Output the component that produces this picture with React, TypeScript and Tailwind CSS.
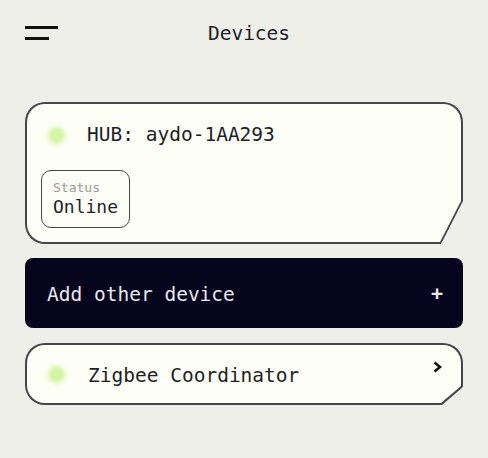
const mono = { fontFamily: '"DejaVu Sans Mono", "Liberation Mono", monospace' }

function Dot() {
  return <div className="h-[17px] w-[17px] shrink-0 rounded-full bg-[#d3f5a2] blur-[2px]" />
}

function Hamburger() {
  return (
    <div className="flex w-[33px] flex-col gap-[8px]">
      <span className="block h-[3px] w-[33px] bg-[#111]" />
      <span className="block h-[3px] w-[24px] bg-[#111]" />
    </div>
  )
}

function Chevron() {
  return (
    <svg width="9" height="12" viewBox="0 0 9 12" fill="none">
      <path d="M1.5 1.5 L7 6 L1.5 10.5" stroke="#111" strokeWidth="2.6" strokeLinejoin="miter" />
    </svg>
  )
}

export default function App() {
  return (
    <div className="min-h-[458px] w-full bg-[#eeefe8] text-[#1e1e28]" style={mono}>
      <header className="relative flex h-[66px] items-center px-[25px]">
        <Hamburger />
        <h1 className="absolute left-[calc(50%+5px)] top-[calc(50%+1px)] -translate-x-1/2 -translate-y-1/2 text-[19.5px]">
          Devices
        </h1>
      </header>

      <main className="mt-[36px] flex flex-col px-[25px]">
        {/* hub card, frame colour shows through as a 2px border */}
        <div className="rounded-[20px] bg-[#45454d] p-[2px] [clip-path:polygon(0_0,100%_0,100%_calc(100%_-_43px),calc(100%_-_22px)_100%,0_100%)]">
          <div className="flex h-[138px] flex-col rounded-[18px] bg-[#fdfef6] [clip-path:polygon(0_0,100%_0,100%_calc(100%_-_41px),calc(100%_-_21px)_100%,0_100%)]">
            <div className="flex items-center gap-[22px] pl-[21px] pt-[21px]">
              <Dot />
              <span className="text-[19.5px] leading-[20px]">HUB: aydo-1AA293</span>
            </div>
            <div className="ml-[14px] mt-[25px] flex h-[58px] w-[89px] flex-col justify-center rounded-[10px] border-[1.5px] border-[#45454d] pl-[11px]">
              <span className="text-[13px] leading-[16px] text-[#9c9c94]">Status</span>
              <span className="text-[18px] leading-[22px]">Online</span>
            </div>
          </div>
        </div>

        <button className="mt-[14px] flex h-[70px] items-center justify-between rounded-[8px] bg-[#07041e] pl-[22px] pr-[20px] text-[#e8e8ec]">
          <span className="pt-[3px] text-[19.5px]">Add other device</span>
          <span className="text-[20px] font-bold">+</span>
        </button>

        <div className="mt-[15px] rounded-[20px] bg-[#45454d] p-[2px] [clip-path:polygon(0_0,100%_0,100%_calc(100%_-_18px),calc(100%_-_21px)_100%,0_100%)]">
          <div className="flex h-[58px] items-center rounded-[18px] bg-[#fdfef6] pl-[21px] pr-[19px] [clip-path:polygon(0_0,100%_0,100%_calc(100%_-_17px),calc(100%_-_20px)_100%,0_100%)]">
            <Dot />
            <span className="ml-[23px] pt-[3px] text-[19.5px]">Zigbee Coordinator</span>
            <span className="ml-auto -mt-[14px]">
              <Chevron />
            </span>
          </div>
        </div>
      </main>
    </div>
  )
}
